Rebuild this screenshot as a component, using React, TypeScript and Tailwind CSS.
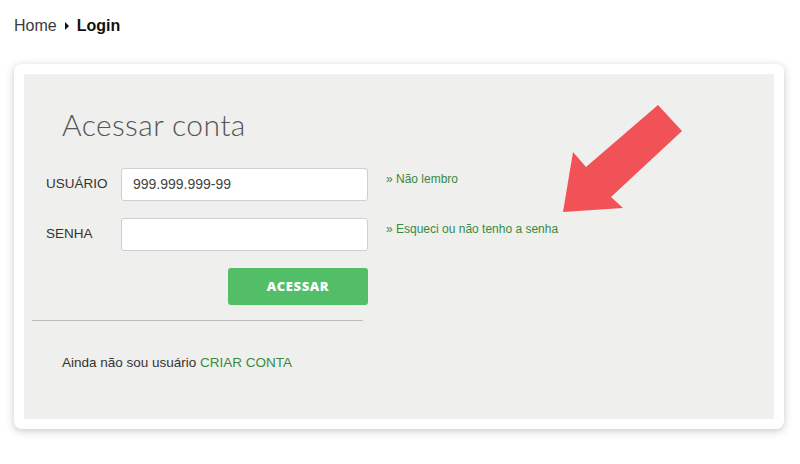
import React from "react";

export default function App() {
  return (
    <div className="w-[800px] h-[464px] bg-white overflow-hidden font-['Liberation_Sans',Arial,sans-serif]">
      <div className="flex items-center h-[18px] mt-[17px] ml-[14px] text-[16px] leading-none">
        <span className="text-[#3a3a3a]">Home</span>
        <span className="mx-[8px] w-0 h-0 border-y-[4px] border-y-transparent border-l-[4px] border-l-[#111]" />
        <span className="font-bold text-[#111]">Login</span>
      </div>
      <div className="mt-[29px] ml-[14px] w-[770px] h-[365px] bg-white rounded-[8px] shadow-[0_2px_8px_rgba(0,0,0,0.22)] p-[10px]">
        <div className="relative h-full bg-[#efefed] flex flex-col">
          <div className="ml-[38px] mt-[35px] h-[30px] text-[30px] leading-[30px] font-light tracking-[0.4px] text-[#555] font-['Lato',sans-serif]">
            Acessar conta
          </div>
          <div className="flex mt-[29px]">
            <div className="flex flex-col">
              <div className="flex items-center h-[33px]">
                <span className="ml-[22px] w-[75px] text-[13.5px] text-[#333]">USUÁRIO</span>
                <div className="w-[247px] h-[33px] bg-white border border-[#cfcfcf] rounded-[3px] flex items-center pl-[11px] text-[14px] text-[#444]">
                  999.999.999-99
                </div>
              </div>
              <div className="flex items-center h-[33px] mt-[17px]">
                <span className="ml-[22px] w-[75px] text-[13.5px] text-[#333]">SENHA</span>
                <div className="w-[247px] h-[33px] bg-white border border-[#cfcfcf] rounded-[3px]" />
              </div>
              <div className="flex justify-end mt-[17px]">
                <div className="w-[140px] h-[37px] bg-[#52bf68] rounded-[3px] flex items-center justify-center text-white text-[13px] font-extrabold tracking-[0.6px] font-['Open_Sans',sans-serif]">
                  ACESSAR
                </div>
              </div>
            </div>
            <div className="flex flex-col ml-[18px] text-[12px] text-[#3a8a3e]">
              <div className="h-[33px] flex items-center -mt-[6px]">» Não lembro</div>
              <div className="h-[33px] flex items-center mt-[17px]">» Esqueci ou não tenho a senha</div>
            </div>
          </div>
          <div className="ml-[8px] mt-[15px] w-[331px] h-px bg-[#bdbdbd]" />
          <div className="ml-[38px] mt-[32px] text-[13.5px] text-[#333]">
            Ainda não sou usuário <span className="text-[#3a8a3e]">CRIAR CONTA</span>
          </div>
          <svg className="absolute left-0 top-0" width="750" height="345" viewBox="24 74 750 345">
            <polygon
              points="563,212 573,152 586,167 658,105 682,131 611,197 623,208"
              fill="#f05257"
            />
          </svg>
        </div>
      </div>
    </div>
  );
}
